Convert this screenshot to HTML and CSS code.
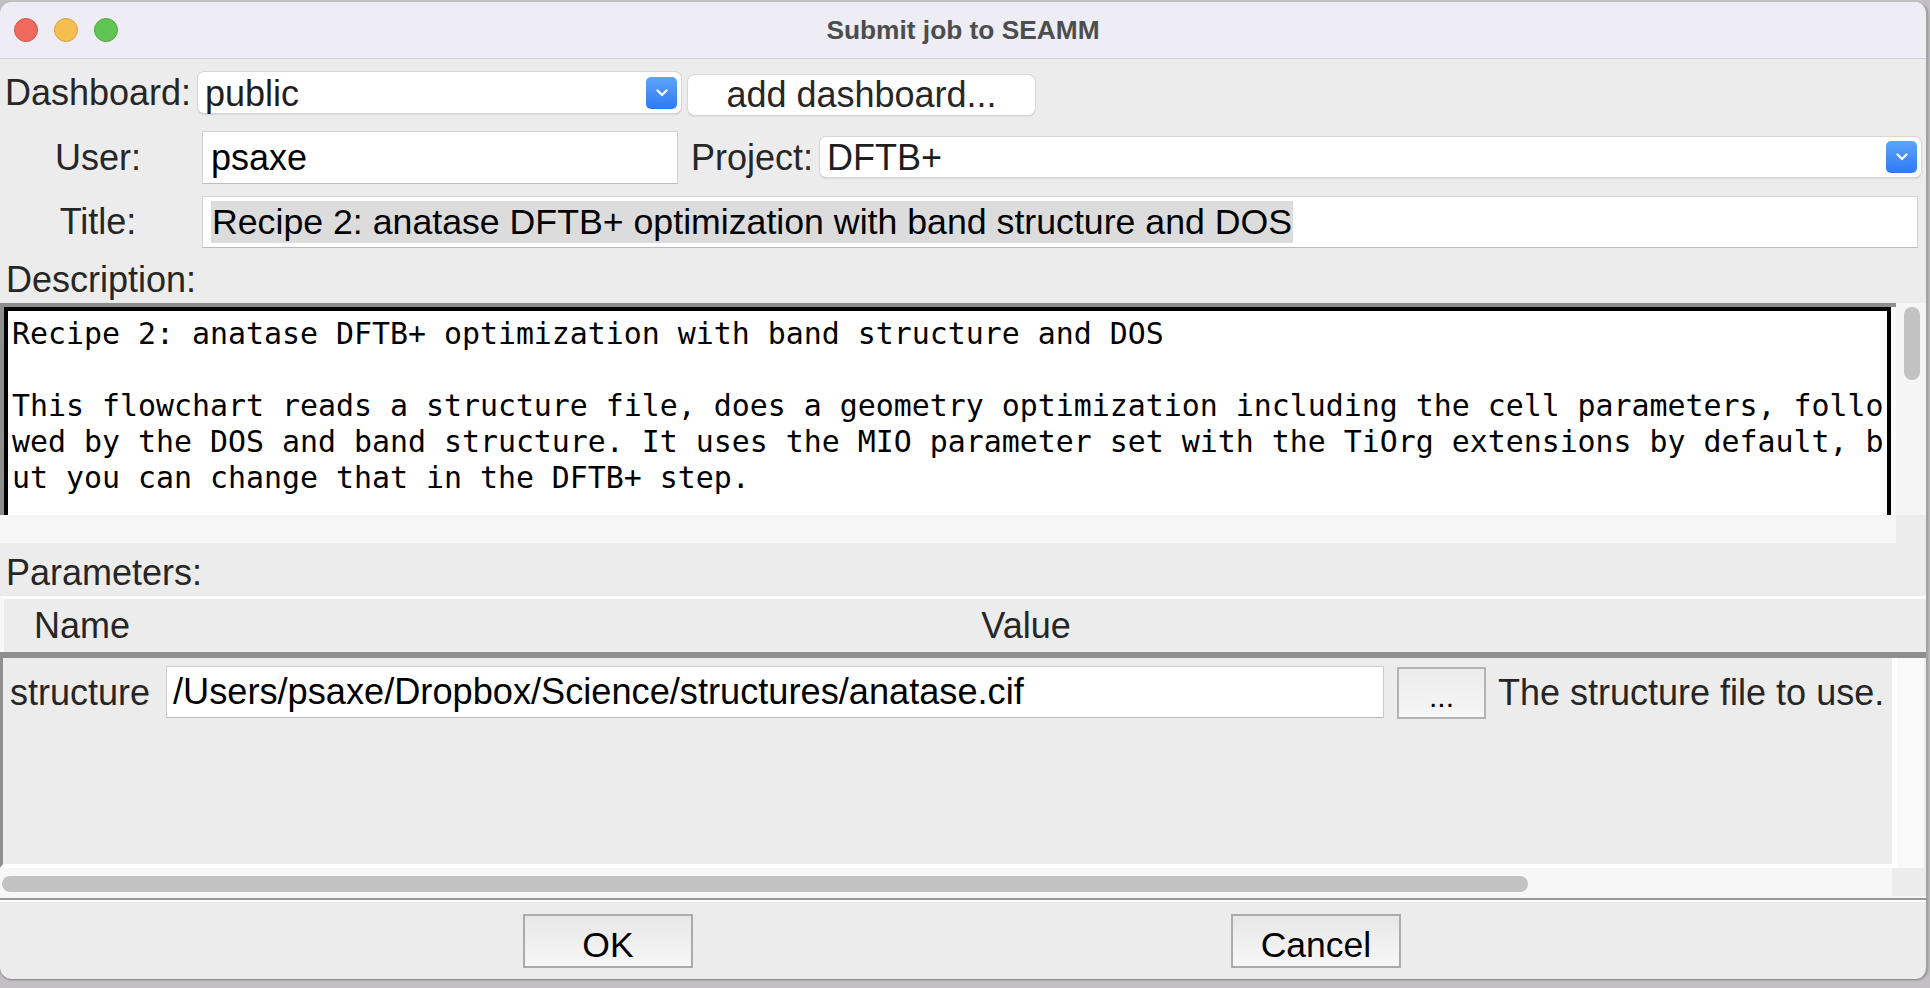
FILE: index.html
```html
<!DOCTYPE html>
<html>
<head>
<meta charset="utf-8">
<title>Submit job to SEAMM</title>
<link rel="stylesheet" href="styles.css">
</head>
<body>
<div class="window">
  <div class="titlebar">
    <div class="lights">
      <span class="light red"></span>
      <span class="light yellow"></span>
      <span class="light green"></span>
    </div>
    <div class="wtitle">Submit job to SEAMM</div>
    <div></div>
  </div>

  <div class="row row1">
    <div class="lbl col0">Dashboard:</div>
    <div class="combo dash-combo">
      <span class="combo-text">public</span>
      <span class="combo-btn"><svg width="12" height="8" viewBox="0 0 12 8"><polyline points="1.5,1.5 6,6 10.5,1.5" fill="none" stroke="#fff" stroke-width="2.2" stroke-linecap="round" stroke-linejoin="round"/></svg></span>
    </div>
    <div class="mac-btn">add dashboard...</div>
  </div>

  <div class="row row2">
    <div class="lbl col0">User:</div>
    <div class="entry user-entry">psaxe</div>
    <div class="lbl project-lbl">Project:</div>
    <div class="combo proj-combo">
      <span class="combo-text">DFTB+</span>
      <span class="combo-btn"><svg width="12" height="8" viewBox="0 0 12 8"><polyline points="1.5,1.5 6,6 10.5,1.5" fill="none" stroke="#fff" stroke-width="2.2" stroke-linecap="round" stroke-linejoin="round"/></svg></span>
    </div>
  </div>

  <div class="row row3">
    <div class="lbl col0">Title:</div>
    <div class="entry title-entry"><span class="sel">Recipe 2: anatase DFTB+ optimization with band structure and DOS</span></div>
  </div>

  <div class="lbl section-lbl">Description:</div>
  <div class="desc">
    <div class="desc-wrap">
      <div class="desc-text">Recipe 2: anatase DFTB+ optimization with band structure and DOS

This flowchart reads a structure file, does a geometry optimization including the cell parameters, follo
wed by the DOS and band structure. It uses the MIO parameter set with the TiOrg extensions by default, b
ut you can change that in the DFTB+ step.</div>
    </div>
    <div class="vscroll"><div class="vthumb"></div></div>
    <div class="hscroll-empty"></div>
    <div class="corner"></div>
  </div>

  <div class="lbl section-lbl params-lbl">Parameters:</div>
  <div class="table">
    <div class="thead">
      <div class="lbl th-name">Name</div>
      <div class="lbl th-value">Value</div>
    </div>
    <div class="tbody">
      <div class="tmain">
        <div class="prow">
          <div class="lbl p-name">structure</div>
          <div class="p-entry">/Users/psaxe/Dropbox/Science/structures/anatase.cif</div>
          <div class="p-btn">...</div>
          <div class="lbl p-desc">The structure file to use.</div>
        </div>
      </div>
      <div class="tvscroll"></div>
      <div class="thscroll"><div class="hthumb"></div></div>
      <div class="corner"></div>
    </div>
    <div class="sep"></div>
  </div>

  <div class="buttons">
    <div class="btn">OK</div>
    <div class="btn">Cancel</div>
  </div>
</div>
</body>
</html>
```

FILE: styles.css
```css
* { box-sizing: border-box; }

html, body { margin: 0; padding: 0; }

body {
  width: 1930px;
  height: 988px;
  overflow: hidden;
  background: #c2c0c2;
  font-family: "Liberation Sans", Arial, sans-serif;
}

.window {
  margin-top: 2px;
  width: 1928px;
  height: 977px;
  background: #ececec;
  border-right: 2px solid #a2a2a2;
  border-radius: 12px;
  overflow: hidden;
  box-shadow: 0 1px 2px rgba(0, 0, 0, 0.35);
}

/* title bar */
.titlebar {
  height: 57px;
  background: #eeecf5;
  border-bottom: 1px solid #d4d2d9;
  display: grid;
  grid-template-columns: 1fr auto 1fr;
  align-items: center;
}

.lights {
  display: flex;
  gap: 16px;
  padding-left: 13.5px;
}

.light {
  width: 24px;
  height: 24px;
  border-radius: 50%;
}
.red { background: #ee6a5e; border: 1px solid #d5544a; }
.yellow { background: #f5be4f; border: 1px solid #d9a23f; }
.green { background: #61c454; border: 1px solid #4fa843; }

.wtitle {
  font-weight: bold;
  font-size: 26.3px;
  color: #4d4d4d;
}

/* generic */
.lbl {
  font-size: 36px;
  color: #262626;
  white-space: nowrap;
}

.row {
  display: flex;
  align-items: flex-start;
}

.col0 {
  width: 196px;
  flex: none;
  text-align: center;
}

/* row 1 */
.row1 { margin-top: 13px; height: 41px; }
.row1 .lbl { line-height: 41px; }

.combo {
  display: flex;
  align-items: center;
  height: 41px;
  background: #fff;
  border-radius: 6px;
  box-shadow: 0 0 0 1px #d6d6d6, 0 1px 1.5px rgba(0, 0, 0, 0.35);
}

.combo-text {
  flex: 1;
  padding-left: 7px;
  padding-top: 2px;
  font-size: 36px;
  color: #1e1e1e;
  line-height: 39px;
}

.combo-btn {
  width: 31px;
  height: 32px;
  margin-right: 4px;
  border-radius: 5px;
  background: linear-gradient(#5ea4fa, #2e7af5);
  display: flex;
  align-items: center;
  justify-content: center;
}

.dash-combo {
  margin-left: 2px;
  width: 483px;
}

.mac-btn {
  margin-left: 7px;
  margin-top: 3px;
  width: 347px;
  height: 40px;
  background: #fff;
  border-radius: 7px;
  box-shadow: 0 0 0 1px #d8d8d8, 0 1px 1.5px rgba(0, 0, 0, 0.3);
  font-size: 36px;
  line-height: 40px;
  text-align: center;
  color: #262626;
}

/* row 2 */
.row2 { margin-top: 18px; height: 53px; }
.row2 .lbl { line-height: 53px; }

.entry {
  background: #fff;
  border: 1px solid #d3d3d3;
  border-bottom-color: #bcbcbc;
  font-size: 36px;
  color: #000;
  padding-left: 8px;
  line-height: 51px;
  white-space: nowrap;
}

.user-entry {
  margin-left: 6px;
  width: 476px;
  height: 53px;
}

.project-lbl { margin-left: 13px; }

.proj-combo {
  flex: 1;
  margin-left: 7px;
  margin-right: 5px;
  margin-top: 6px;
  height: 40px;
}
.proj-combo .combo-text { line-height: 38px; }

/* row 3 */
.row3 { margin-top: 12px; height: 52px; }
.row3 .lbl { line-height: 52px; }

.title-entry {
  flex: 1;
  margin-left: 6px;
  margin-right: 8px;
  height: 52px;
  display: flex;
  align-items: center;
  font-size: 35.7px;
}

.sel {
  display: block;
  background: #dcdcdc;
  height: 42px;
  line-height: 42px;
  padding: 0 1px;
}

/* description */
.section-lbl {
  margin-top: 14px;
  height: 36px;
  line-height: 36px;
  padding-left: 6px;
}

.desc {
  margin-top: 5px;
  display: grid;
  grid-template-columns: 1896px 30px;
  grid-template-rows: 212px 28px;
}

.desc-wrap {
  border-top: 4px solid #8e8e8e;
  border-left: 4px solid #8e8e8e;
  background: #fafafa;
  padding-right: 5px;
  overflow: hidden;
}

.desc-text {
  height: 100%;
  border: 4px solid #000;
  border-bottom: none;
  background: #fff;
  padding: 5px 0 0 4px;
  font-family: "DejaVu Sans Mono", monospace;
  font-size: 29.9px;
  line-height: 36px;
  white-space: pre;
  overflow: hidden;
  color: #000;
}

.vscroll {
  background: #f5f5f5;
  padding: 4px 6px 0 8px;
}

.vthumb {
  width: 16px;
  height: 73px;
  border-radius: 8px;
  background: #c2c2c2;
}

.hscroll-empty { background: #f6f6f6; }
.corner { background: #ececec; }

/* parameters table */
.params-lbl { margin-top: 12px; }

.table { margin-top: 5px; }

.thead {
  display: flex;
  align-items: center;
  height: 56px;
  border-top: 3px solid #fff;
  border-left: 4px solid #f8f8f8;
}

.th-name { width: 156px; text-align: center; }
.th-value { width: 1732px; text-align: center; }

.tbody {
  border-top: 6px solid #8e8e8e;
  display: grid;
  grid-template-columns: 1892px 34px;
  grid-template-rows: 210px 28px;
}

.tmain {
  border-left: 3px solid #8e8e8e;
  border-bottom: 4px solid #fff;
  background: #ececec;
  padding-top: 8px;
}

.prow {
  display: flex;
  align-items: flex-start;
  height: 53px;
}

.p-name {
  width: 163px;
  padding-left: 7px;
  line-height: 54px;
}

.p-entry {
  width: 1218px;
  height: 52px;
  background: #fff;
  border: 1px solid #cacaca;
  border-bottom-color: #b9b9b9;
  font-size: 36.2px;
  line-height: 50px;
  padding-left: 6px;
  color: #000;
  white-space: nowrap;
}

.p-btn {
  margin-left: 13px;
  margin-top: 1px;
  width: 89px;
  height: 52px;
  border: 2px solid #b3b3b3;
  background: linear-gradient(#ececec, #f6f6f6);
  font-size: 30px;
  line-height: 48px;
  padding-top: 4px;
  text-align: center;
  color: #000;
}

.p-desc {
  margin-left: 12px;
  line-height: 54px;
}

.tvscroll {
  border-left: 5px solid #fff;
  border-right: 2px solid #ececec;
  background: #f9f9f9;
}

.thscroll {
  background: #f7f7f7;
  padding: 8px 0 0 2px;
}

.hthumb {
  width: 1526px;
  height: 16px;
  border-radius: 8px;
  background: #c2c2c2;
}

.sep {
  height: 6px;
  border-top: 2px solid #f6f6f6;
  border-bottom: 2px solid #fff;
  background: #989898;
}

/* bottom buttons */
.buttons {
  display: flex;
  justify-content: center;
  gap: 538px;
  padding-top: 12px;
  padding-right: 2px;
}

.btn {
  width: 170px;
  height: 54px;
  border: 2px solid #ababab;
  background: linear-gradient(#e7e7e7, #f7f7f7);
  font-size: 35.5px;
  line-height: 52px;
  padding-top: 3px;
  text-align: center;
  color: #000;
}
```
